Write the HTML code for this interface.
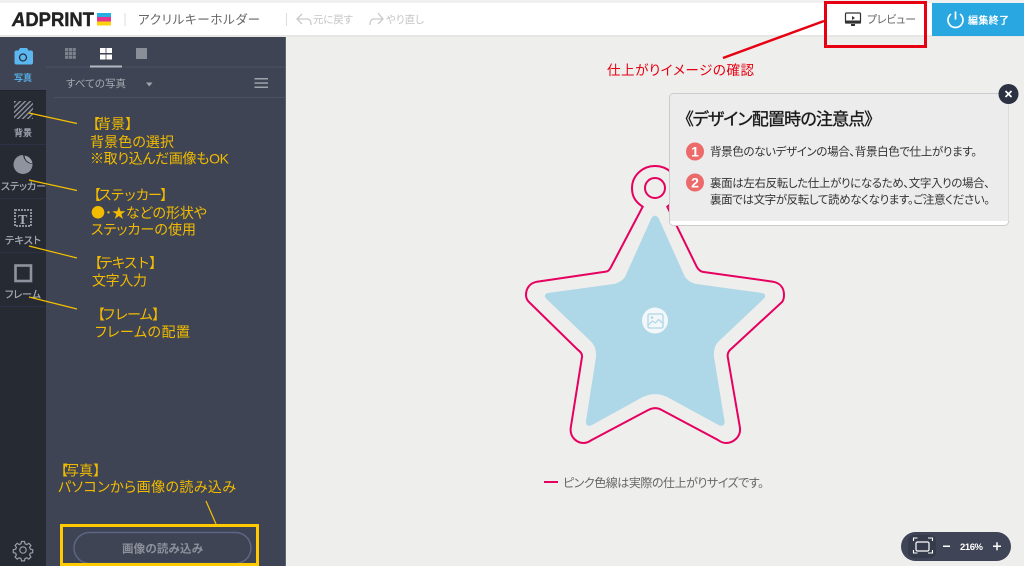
<!DOCTYPE html>
<html lang="ja"><head><meta charset="utf-8"><title>アクリルキーホルダー</title>
<style>
html,body{margin:0;padding:0;background:#eeeeec;width:1024px;height:566px;overflow:hidden}
svg{display:block;position:absolute;left:0;top:0}
text{font-family:"Liberation Sans","Noto Sans CJK JP",sans-serif;font-feature-settings:"palt"}
.y{fill:#f2bb00;font-size:14px}
text.b{font-feature-settings:normal}
.k{letter-spacing:-1.500px}
.rail{fill:#a9adb8;font-size:10px;stroke:#a9adb8;stroke-width:.25}
.note{fill:#333;font-size:11.5px}
</style></head><body>
<svg width="1024" height="566" viewBox="0 0 1024 566" xmlns="http://www.w3.org/2000/svg">
<rect width="1024" height="566" fill="#eeeeec"/>
<rect y="0" width="1024" height="3" fill="#f0f0f0"/>
<rect y="3" width="1024" height="33" fill="#fff"/>
<rect y="35" width="1024" height="2" fill="#e6e6e4"/>
<!-- logo -->
<text x="12" y="26" font-size="19" font-weight="700" fill="#222" stroke="#222" stroke-width=".4" textLength="82" lengthAdjust="spacingAndGlyphs"><tspan font-style="italic">A</tspan>DPRINT</text>
<rect x="97" y="13" width="14" height="4" fill="#27aee3"/><rect x="97" y="17" width="14" height="4.500" fill="#e5348e"/><rect x="97" y="21.500" width="14" height="4" fill="#fbd30c"/>
<rect x="124.500" y="13" width="1" height="13" fill="#ddd"/>
<text x="138" y="24" font-size="12.500" fill="#666" textLength="122">アクリルキーホルダー</text>
<rect x="286" y="13" width="1" height="13" fill="#ddd"/>
<g fill="none" stroke="#c9c9c9" stroke-width="1.300"><path d="M302 14l-5 5 5 5M297 19h10c3 0 4 2 4 6"/><path d="M378 13l5 6-5 5M383 19h-9c-3 0-4 2-4 6"/></g>
<text x="313" y="23" font-size="10.500" fill="#c4c4c4" textLength="40">元に戻す</text>
<text x="386" y="23" font-size="10.500" fill="#c4c4c4" textLength="38">やり直し</text>
<!-- preview -->
<rect x="845.500" y="13" width="15" height="10" rx="1" fill="#fff" stroke="#333" stroke-width="1.200"/><rect x="845" y="20.500" width="16" height="3" fill="#333"/><rect x="851" y="24" width="4" height="2" fill="#333"/><path d="M852 16l3 2-3 2z" fill="#333"/>
<text x="867" y="23" font-size="11" fill="#666" textLength="49">プレビュー</text>
<!-- finish -->
<rect x="932" y="3" width="92" height="33" fill="#29a7e1"/>
<path d="M951 14a7.500 7.500 0 1 0 9 0" fill="none" stroke="#fff" stroke-width="1.700"/><path d="M955.500 11.500v8" stroke="#fff" stroke-width="1.700"/>
<text x="968" y="24" font-size="10" font-weight="700" fill="#fff" textLength="41">編集終了</text>
<!-- sidebar -->
<rect x="0" y="37" width="46" height="529" fill="#252a33"/>
<rect x="46" y="37" width="239" height="529" fill="#3e4453"/>
<rect x="285" y="37" width="1" height="529" fill="#5f646e"/>
<rect x="0" y="37" width="46" height="53" fill="#3e4453"/>
<rect x="0" y="90" width="46" height="1" fill="#20242d"/>
<g fill="#2c3148"><rect y="144" width="46" height="1"/><rect y="198" width="46" height="1"/><rect y="252" width="46" height="1"/><rect y="306" width="46" height="1"/></g>
<!-- camera -->
<path d="M16 50.500h2.500l1.500-2.500h7l1.500 2.500h3a2 2 0 0 1 1.500 2v10a2 2 0 0 1-2 2h-14.500a2 2 0 0 1-2-2v-10a2 2 0 0 1 2-2z" fill="#5ab7ef"/><circle cx="23" cy="57.500" r="3.500" fill="none" stroke="#2c3140" stroke-width="1.300"/>
<text x="14" y="81" font-size="9" font-weight="700" fill="#55aee6">写真</text>
<!-- bg icon -->
<rect x="14" y="101" width="19" height="18" fill="#8a8e99"/>
<path d="M10 109L20 99M10 114L25 99M10 119L30 99M13 121L35 99M18 121L35 104M23 121L35 109M28 121L35 114" stroke="#252a33" stroke-width="2" fill="none"/>
<text x="14" y="136" class="rail" style="font-size:9px">背景</text>
<!-- sticker icon -->
<circle cx="23" cy="164.500" r="9.500" fill="#8f939e"/><path d="M23 155c1 5 4 9 10 9l2-9-8-3z" fill="#252a33"/><path d="M24.500 155.500c.5 4.500 3.500 7.500 8 8a9.500 9.500 0 0 0-8-8z" fill="#9ea2ac"/>
<text x="1" y="190" class="rail" textLength="45">ステッカー</text>
<!-- text icon -->
<rect x="15" y="210" width="16" height="16" fill="none" stroke="#9a9ea8" stroke-width="1.800" stroke-dasharray="2 1"/>
<text x="18" y="224" font-size="14" font-weight="700" fill="#a8acb5" style="font-family:'Liberation Serif',serif">T</text>
<text x="5" y="244" class="rail" textLength="36">テキスト</text>
<!-- frame icon -->
<rect x="15.500" y="265.500" width="15.500" height="15.500" fill="none" stroke="#8f939e" stroke-width="2.600"/>
<text x="5" y="298" class="rail" textLength="36">フレーム</text>
<!-- gear -->
<g transform="translate(23 550)" fill="none" stroke="#9a9ea8" stroke-width="1.200"><circle r="3.200"/><path d="M-1.500-8.500h3l.5 2.300 1.800.8 2-1.300 2.100 2.100-1.300 2 .8 1.800 2.300.5v3l-2.300.5-.8 1.800 1.300 2-2.100 2.100-2-1.300-1.800.8-.5 2.300h-3l-.5-2.300-1.800-.8-2 1.300-2.100-2.100 1.300-2-.8-1.800-2.300-.5v-3l2.300-.5.8-1.800-1.300-2 2.100-2.100 2 1.300 1.800-.8z"/></g>
<!-- tabs -->
<g fill="#7d818d"><rect x="65" y="48" width="3.200" height="3.200"/><rect x="68.800" y="48" width="3.200" height="3.200"/><rect x="72.600" y="48" width="3.200" height="3.200"/><rect x="65" y="51.800" width="3.200" height="3.200"/><rect x="68.800" y="51.800" width="3.200" height="3.200"/><rect x="72.600" y="51.800" width="3.200" height="3.200"/><rect x="65" y="55.600" width="3.200" height="3.200"/><rect x="68.800" y="55.600" width="3.200" height="3.200"/><rect x="72.600" y="55.600" width="3.200" height="3.200"/></g>
<g fill="#fff"><rect x="100" y="48" width="5.600" height="5"/><rect x="106.400" y="48" width="5.600" height="5"/><rect x="100" y="54.500" width="5.600" height="5"/><rect x="106.400" y="54.500" width="5.600" height="5"/></g>
<rect x="136" y="48" width="11" height="11" fill="#8a8e99"/>
<rect x="46" y="66.500" width="239" height="1" fill="#4c5262"/>
<rect x="90" y="65.500" width="32" height="2" fill="#b4b8c2"/>
<text x="66" y="87" font-size="10.500" fill="#a7aab2" textLength="60">すべての写真</text>
<path d="M146 82.500h6.500l-3.200 4z" fill="#a0a3ab"/>
<g fill="#a0a3ab"><rect x="254.500" y="78" width="13.500" height="1.500"/><rect x="254.500" y="82.300" width="13.500" height="1.500"/><rect x="254.500" y="86.500" width="13.500" height="1.500"/></g>
<rect x="54" y="97" width="231" height="1" fill="#4c5262"/>
<!-- upload button -->
<rect x="74" y="532.500" width="177" height="31" rx="15.500" fill="none" stroke="#5c6685" stroke-width="1.500"/>
<text x="122" y="552.500" font-size="11.500" font-weight="700" fill="#8d919b" textLength="81">画像の読み込み</text>
<!-- annotations sidebar -->
<text class="y b" y="129"><tspan x="86">【</tspan><tspan x="97">背景</tspan><tspan x="125">】</tspan></text>
<text class="y" x="90" y="147" textLength="84">背景色の選択</text>
<text class="y" x="90" y="163.500" textLength="139">※取り込んだ画像もOK</text>
<text class="y b" y="200"><tspan x="87">【</tspan><tspan x="98" class="k">ステッカー</tspan><tspan x="160">】</tspan></text>
<text class="y" x="91" y="218" textLength="116" style="font-family:'Noto Sans CJK JP',sans-serif">●･★などの形状や</text>
<text class="y" x="91" y="234.500" textLength="105">ステッカーの使用</text>
<text class="y b" y="268"><tspan x="88">【</tspan><tspan x="99" class="k">テキスト</tspan><tspan x="149">】</tspan></text>
<text class="y" x="92" y="285.500" textLength="55">文字入力</text>
<text class="y b" y="319.500"><tspan x="91">【</tspan><tspan x="102" class="k">フレーム</tspan><tspan x="152">】</tspan></text>
<text class="y" x="95" y="337" textLength="95">フレームの配置</text>
<text class="y b" y="475.500"><tspan x="54">【</tspan><tspan x="65">写真</tspan><tspan x="93">】</tspan></text>
<text class="y" x="58" y="492" textLength="178">パソコンから画像の読み込み</text>
<g stroke="#f5bf00" stroke-width="1.200"><path d="M29 113l48 10.500M29 180l48 10.500M29 246l48 12M29 297l48 12M206 501l10 23"/></g>
<rect x="61.500" y="525.500" width="196" height="39" fill="none" stroke="#ffcb00" stroke-width="3"/>
<!-- star -->
<path d="M642.700 206.700C634 201 632 195 632 188a23 22 0 0 1 23-22a23 22 0 0 1 23 22c0 7-3 13-10.700 18.700L696.700 266.700c2 3.500 4 5 7 5.300L773 281.700c8 1.500 11 7 11 13.300c0 3-.5 5-1.800 6.800L730 350c-2 2-2.500 4.500-2.300 6.700L740 428c1 9-7 15-14 15-3 0-5-.8-8-3L661.700 410c-4-2.300-9-2.300-13.400 0L591.700 440c-3 2-5 3-8 3-7 0-14-6-13-15L582 357c.3-2.500-1-5-4-7L530 303c-3-2.500-4-5-4-8 0-7 4-12 11-13.300L605 271.700c3-.3 4-1.300 5.500-3.700z" fill="none" stroke="#e6005f" stroke-width="2"/>
<circle cx="655" cy="188" r="10" fill="none" stroke="#e6005f" stroke-width="2"/>
<path d="M651.500 218c2-3 5-3 7 0L685 277c4 5 9 7 15 7.500L762 293c3.500.7 4 3.500 2 5.500L718 342c-3.500 4-4.500 9-4 15L724.500 421c.5 4-2 5.500-5 4.500L666.700 396.700c-8-3.500-15-3.500-23.400 0L591 425.500c-3 1-5.500-.5-5-4.500L596 357c.5-6-1-11-4.500-15L546 298.500c-2-2-1.500-4.800 2-5.500L610 284.500c6-.5 11-2.500 15-7.500z" fill="#aed7e7"/>
<circle cx="655" cy="320.500" r="13" fill="#f2f7f9"/>
<rect x="648" y="314" width="15" height="14" rx="1.500" fill="none" stroke="#aed7e7" stroke-width="1.300"/><circle cx="652" cy="317.500" r="1.300" fill="#aed7e7"/><path d="M648.500 325l4-4 3 2 3-3.500 4 3.500" fill="none" stroke="#aed7e7" stroke-width="1.200"/>
<rect x="544" y="481" width="14" height="2" fill="#e6005f"/>
<text x="563" y="487" font-size="12" fill="#666" textLength="201">ピンク色線は実際の仕上がりサイズです。</text>
<!-- notice -->
<rect x="669.500" y="93.500" width="339" height="132" rx="4" fill="#fff" stroke="#ccc"/>
<path d="M670 97.500a3.500 3.500 0 0 1 3.500-3.500h331.500a3.500 3.500 0 0 1 3.500 3.500V221H670z" fill="#ececec"/>
<text x="685" y="125" font-size="17" fill="#1a1a1a" textLength="188" style="stroke:#1a1a1a;stroke-width:.35">《デザイン配置時の注意点》</text>
<circle cx="695" cy="151.500" r="9" fill="#ec6a6a"/><text x="695" y="156.500" text-anchor="middle" font-size="14" font-weight="700" fill="#fff">1</text>
<circle cx="695" cy="182.500" r="9" fill="#ec6a6a"/><text x="695" y="187.500" text-anchor="middle" font-size="14" font-weight="700" fill="#fff">2</text>
<text class="note" x="710" y="155.500" textLength="267">背景色のないデザインの場合、背景白色で仕上がります。</text>
<text class="note" x="710" y="187" textLength="280">裏面は左右反転した仕上がりになるため、文字入りの場合、</text>
<text class="note" x="710" y="203.500" textLength="280">裏面では文字が反転して読めなくなります。ご注意ください。</text>
<circle cx="1008.500" cy="94" r="10" fill="#2d3243"/>
<path d="M1005.500 91l6 6M1011.500 91l-6 6" stroke="#fff" stroke-width="1.700"/>
<!-- red annotation -->
<path d="M824 21L723 58" stroke="#e60012" stroke-width="2.500"/>
<rect x="825.500" y="2.500" width="100" height="44" fill="none" stroke="#e60012" stroke-width="3"/>
<text x="607" y="75" font-size="13.500" fill="#e60012" textLength="147">仕上がりイメージの確認</text>
<!-- zoom -->
<rect x="901" y="532" width="110" height="29" rx="14.500" fill="#3f4456"/>
<rect x="908" y="535" width="28" height="23" rx="6" fill="#363b4b"/>
<rect x="916" y="542" width="13" height="9" rx="1.500" fill="none" stroke="#fff" stroke-width="1.200"/>
<path d="M913.500 541v-3h4M928 538h4.500v3M913.500 550v3h4M932.500 550v3h-4.500" fill="none" stroke="#fff" stroke-width="1.100"/>
<rect x="943" y="545.500" width="7" height="1.500" fill="#fff"/>
<text x="960" y="550" font-size="9.500" font-weight="700" fill="#fff" textLength="23">216%</text>
<path d="M993 546.300h8M997 542.300v8" stroke="#fff" stroke-width="1.500"/>
</svg>
</body></html>
